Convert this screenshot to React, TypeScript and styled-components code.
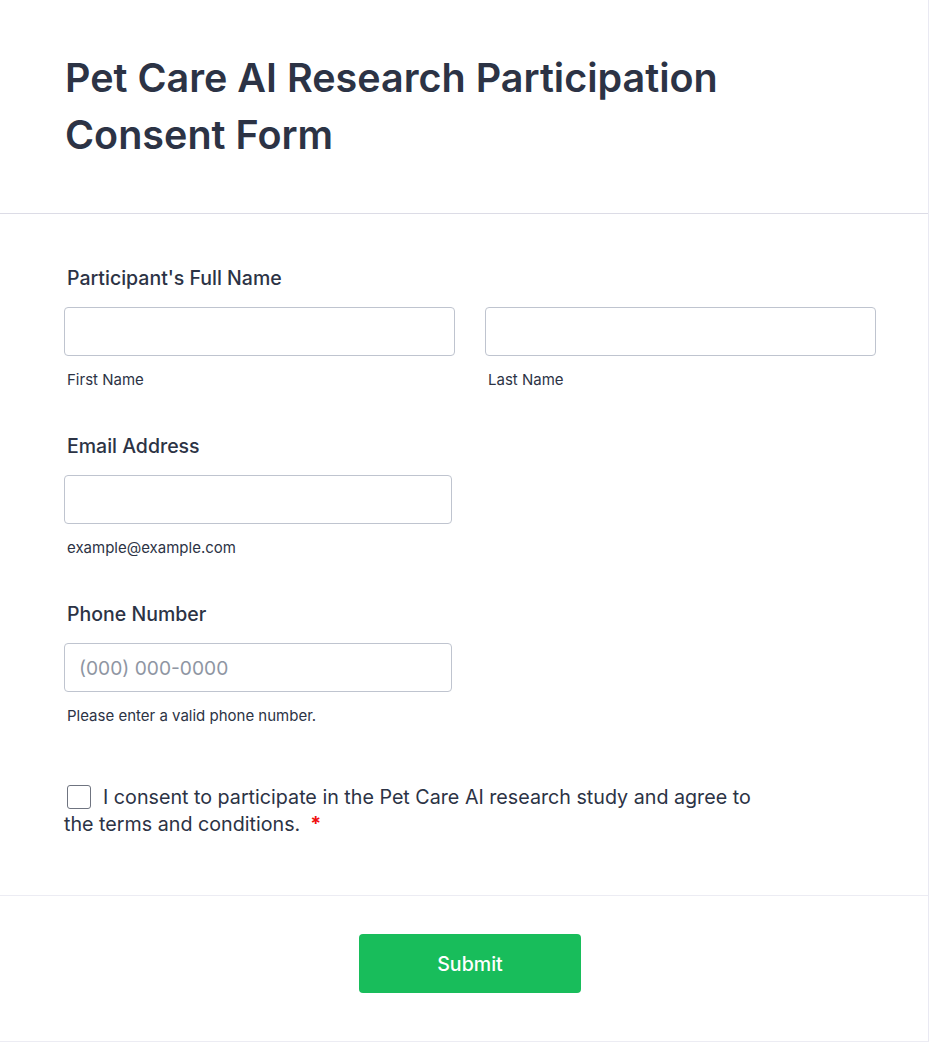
import React from "react";
import styled, { createGlobalStyle } from "styled-components";

const Global = createGlobalStyle`
  html, body { margin: 0; padding: 0; background: #ffffff; }
  body { font-family: Inter, "Noto Sans", sans-serif; color: #2c3345; }
  * { box-sizing: border-box; }
`;

const Card = styled.div`
  width: 929px;
  min-height: 1042px;
  background: #fff;
  border-right: 1px solid #e9e9f2;
  border-bottom: 1px solid #ececf3;
  display: flex;
  flex-direction: column;
`;

const Header = styled.header`
  padding: 50px 64px 49px 65px;
  border-bottom: 1px solid #dcdce6;
`;

const Title = styled.h1`
  margin: 0;
  font-size: 39.5px;
  line-height: 57px;
  font-weight: 600;
  color: #2c3345;
  max-width: 720px;
`;

const Body = styled.div`
  padding: 51px 54px 0 64px;
  display: flex;
  flex-direction: column;
`;

const Field = styled.div`
  display: flex;
  flex-direction: column;
  padding-bottom: 43px;
`;

const Label = styled.label`
  font-size: 19.5px;
  font-weight: 500;
  line-height: 26px;
  padding-left: 3px;
  margin-bottom: 16px;
  color: #2c3345;
`;

const Row = styled.div<{ cols: number }>`
  display: grid;
  grid-template-columns: ${(p) => (p.cols === 2 ? "391px 391px" : "388px")};
  column-gap: 30px;
`;

const InputWrap = styled.div`
  display: flex;
  flex-direction: column;
`;

const Input = styled.input`
  height: 49px;
  width: 100%;
  border: 1px solid #bfc4cf;
  border-radius: 4px;
  padding: 0 14px;
  font-family: Inter, sans-serif;
  font-size: 19.2px;
  color: #2c3345;
  outline: none;
  &::placeholder { color: #8f96a3; }
`;

const SubLabel = styled.span`
  font-size: 15px;
  line-height: 20px;
  margin-top: 14px;
  padding-left: 3px;
  color: #2c3345;
`;

const Consent = styled.div`
  margin-top: 15px;
  max-width: 700px;
  font-size: 19.7px;
  line-height: 27px;
  color: #2c3345;
`;

const Check = styled.span`
  display: inline-block;
  width: 24px;
  height: 24px;
  border: 1px solid #6f7480;
  border-radius: 3px;
  vertical-align: -5px;
  margin: 0 12px 0 3px;
`;

const Req = styled.span`
  color: #f00f0f;
  font-weight: 700;
  padding-left: 10px;
`;

const Footer = styled.div`
  margin-top: 57px;
  border-top: 1px solid #ececf3;
  padding: 38px 0 48px;
  display: flex;
  justify-content: center;
`;

const Submit = styled.button`
  width: 222px;
  height: 59px;
  background: #18bd5b;
  border: none;
  border-radius: 4px;
  color: #fff;
  font-family: Inter, sans-serif;
  font-size: 19.6px;
  font-weight: 500;
  margin-left: 12px;
`;

export default function App() {
  return (
    <>
      <Global />
      <Card>
        <Header>
          <Title>Pet Care AI Research Participation Consent Form</Title>
        </Header>
        <Body>
          <Field>
            <Label>Participant's Full Name</Label>
            <Row cols={2}>
              <InputWrap>
                <Input />
                <SubLabel>First Name</SubLabel>
              </InputWrap>
              <InputWrap>
                <Input />
                <SubLabel>Last Name</SubLabel>
              </InputWrap>
            </Row>
          </Field>
          <Field>
            <Label>Email Address</Label>
            <Row cols={1}>
              <InputWrap>
                <Input />
                <SubLabel>example@example.com</SubLabel>
              </InputWrap>
            </Row>
          </Field>
          <Field>
            <Label>Phone Number</Label>
            <Row cols={1}>
              <InputWrap>
                <Input placeholder="(000) 000-0000" />
                <SubLabel>Please enter a valid phone number.</SubLabel>
              </InputWrap>
            </Row>
          </Field>
          <Consent>
            <Check />I consent to participate in the Pet Care AI research study and agree to the terms and conditions.
            <Req>*</Req>
          </Consent>
        </Body>
        <Footer>
          <Submit>Submit</Submit>
        </Footer>
      </Card>
    </>
  );
}
